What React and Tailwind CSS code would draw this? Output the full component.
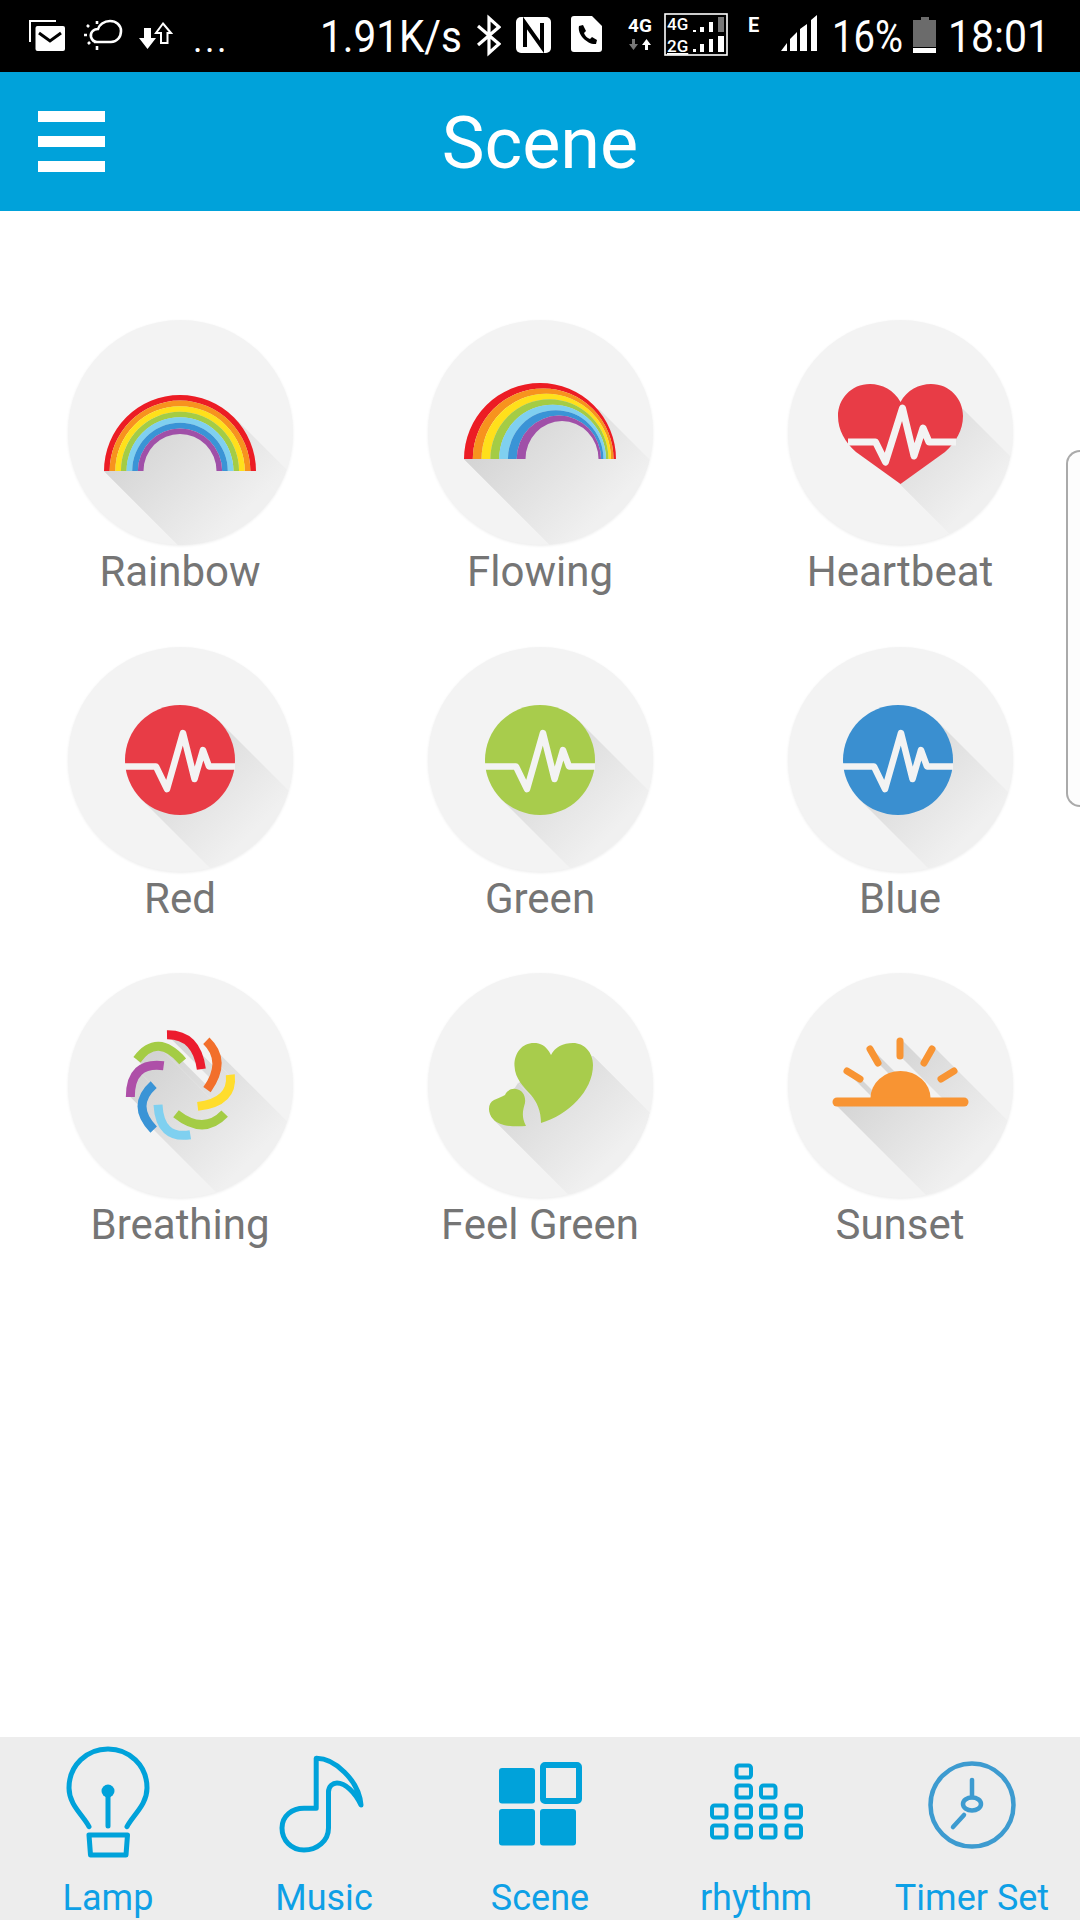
import React from 'react';

const BLUE = '#00a2da';
const BG = '#f3f3f3';

// long shadow behind an icon, thrown 45deg down-right from a segment
const cast = (x1, y1, x2, y2, d = 240) =>
    `${x1},${y1} ${x2},${y2} ${x2 + d},${y2 + d} ${x1 + d},${y1 + d}`;

const Shadow = ({ id, segs }) => (
    <>
        <defs>
            <linearGradient id={id} gradientUnits="userSpaceOnUse" x1="65" y1="105" x2="165" y2="205">
                <stop offset="0" stopColor="#d3d3d3" />
                <stop offset="1" stopColor="#f0f0f0" />
            </linearGradient>
        </defs>
        {segs.map((s, i) => (
            <polygon key={i} points={cast(...s)} fill={`url(#${id})`} />
        ))}
    </>
);

const BANDS = ['#ec1c24', '#f7931e', '#ffe01b', '#a4cc45', '#7fd0f0', '#3a94d6', '#a050a8'];

// nested half ellipses: outer box and inner box, all on one base line
const Bow = ({ l, r, top, il, ir, itop, base }) => (
    <>
        {BANDS.map((c, i) => {
            const at = (a, b, k) => a + ((b - a) * k) / 7;
            const l1 = at(l, il, i), r1 = at(r, ir, i), t1 = at(top, itop, i);
            const l2 = at(l, il, i + 1), r2 = at(r, ir, i + 1), t2 = at(top, itop, i + 1);
            const d = `M${l1},${base} A${(r1 - l1) / 2},${base - t1} 0 0 1 ${r1},${base} L${r2},${base} A${(r2 - l2) / 2},${base - t2} 0 0 0 ${l2},${base} Z`;
            return <path key={c} d={d} fill={c} />;
        })}
    </>
);

const Rainbow = () => (
    <svg viewBox="0 0 225 225" className="w-full h-full">
        <Shadow id="s-rainbow" segs={[[36, 151, 112, 75], [112, 75, 166, 97], [36, 151, 188, 151]]} />
        <Bow l={36} r={188} top={75} il={75.5} ir={148.5} itop={114} base={151} />
    </svg>
);

const Flowing = () => (
    <svg viewBox="0 0 225 225" className="w-full h-full">
        <Shadow id="s-flowing" segs={[[36, 139, 112, 63], [112, 63, 172, 90], [36, 139, 188, 139]]} />
        <Bow l={36} r={188} top={63} il={97.5} ir={170.5} itop={101} base={139} />
    </svg>
);

const Heartbeat = () => (
    <svg viewBox="0 0 225 225" className="w-full h-full">
        <Shadow id="s-heart" segs={[[112, 164, 172, 86], [112, 164, 50, 96]]} />
        <path
            d="M112.5,82 C106,70 94,64 82,64 C63,64 50,79 50,96 C50,110 57,122 68,132 L112.5,164 L157,132 C168,122 175,110 175,96 C175,79 162,64 143,64 C131,64 119,70 112.5,82 Z"
            fill="#e83c46"
        />
        <polyline
            points="60,122 87.5,122 97.5,142 114.5,88 126,136 135,108 141,122 168,122"
            fill="none"
            stroke={BG}
            strokeWidth="7"
            strokeLinejoin="round"
        />
    </svg>
);

const Pulse = ({ id, color, cx }) => (
    <svg viewBox="0 0 225 225" className="w-full h-full">
        <Shadow id={id} segs={[[cx - 39, 152, cx + 39, 74]]} />
        <circle cx={cx} cy="113" r="55" fill={color} />
        <polyline
            points={`${cx - 55},119.5 ${cx - 24},119.5 ${cx - 13},142 ${cx + 3},86 ${cx + 14.5},132 ${cx + 23},103 ${cx + 29},119.5 ${cx + 55},119.5`}
            fill="none"
            stroke={BG}
            strokeWidth="6.5"
            strokeLinejoin="round"
        />
    </svg>
);

// crop coords of the blades -> circle coords
const toCircle = ([x, y]) => [x / 3 - 26, y / 3 - 13.3];

const blade = (a, via, b) => {
    const [ax, ay] = toCircle(a), [vx, vy] = toCircle(via), [bx, by] = toCircle(b);
    return `M${ax},${ay} Q${2 * vx - (ax + bx) / 2},${2 * vy - (ay + by) / 2} ${bx},${by}`;
};

const BLADES = [
    ['#ec1c2e', [375, 225], [445, 250], [478, 328]],
    ['#f26f2b', [493, 243], [525, 310], [495, 390]],
    ['#ffdd2d', [565, 345], [545, 410], [467, 440]],
    ['#a4cc45', [548, 462], [480, 495], [402, 462]],
    ['#7fd0f0', [445, 525], [375, 510], [348, 435]],
    ['#3a94d6', [335, 375], [300, 440], [335, 510]],
    ['#ae4fa8', [365, 318], [290, 335], [265, 412]],
    ['#a4cc45', [285, 300], [350, 260], [422, 305]],
];

const bladeSegs = BLADES.flatMap(([, a, v, b]) => [
    [...toCircle(a), ...toCircle(v)],
    [...toCircle(v), ...toCircle(b)],
]);

const Breathing = () => (
    <svg viewBox="0 0 225 225" className="w-full h-full">
        <Shadow id="s-breath" segs={bladeSegs} />
        {BLADES.map(([c, a, v, b], i) => (
            <path key={i} d={blade(a, v, b)} fill="none" stroke={c} strokeWidth="9" />
        ))}
    </svg>
);

const FeelGreen = () => (
    <svg viewBox="0 0 225 225" className="w-full h-full">
        <Shadow id="s-feel" segs={[[66, 147, 165, 83], [66, 147, 90, 110], [90, 110, 165, 83]]} />
        <path
            d="M123,82 C118,72 112,70 106,70 C94,70 86,80 86.5,93 C87,106 96,114 103,122 C109,129 113,138 113,150 C140,142 165,118 165,92 C165,79 156,70 145,70 C135,70 127,74 123,82 Z"
            fill="#a8cc4c"
        />
        <path
            d="M77,122 C79,117 84,115 88,116 C94,117 98,122 97,130 C95,137 93,143 98,153 C84,154 71,153 65,146 C59,139 60,130 66,127 C70,125 74,124 77,122 Z"
            fill="#a8cc4c"
        />
    </svg>
);

const Sunset = () => (
    <svg viewBox="0 0 225 225" className="w-full h-full">
        <Shadow
            id="s-sun"
            segs={[
                [45, 129, 180, 129],
                [83, 125, 142, 125],
                [112, 65, 112, 83],
                [81, 73, 90, 90],
                [145, 73, 135, 90],
                [57, 97, 73, 106],
                [168, 97, 153, 106],
                [153, 106, 180, 129],
            ]}
        />
        <path d="M82.5,125 A30,27 0 0 1 142.5,125 Z" fill="#f89433" />
        <g stroke="#f89433" strokeLinecap="round" fill="none">
            <line x1="49" y1="129" x2="176" y2="129" strokeWidth="9" />
            <line x1="112" y1="68" x2="112" y2="83" strokeWidth="7" />
            <line x1="82" y1="76" x2="90" y2="90" strokeWidth="7" />
            <line x1="144" y1="76" x2="136" y2="90" strokeWidth="7" />
            <line x1="59" y1="98" x2="72" y2="106" strokeWidth="7" />
            <line x1="166" y1="98" x2="153" y2="106" strokeWidth="7" />
        </g>
    </svg>
);

const scenes = [
    { name: 'Rainbow', Icon: Rainbow },
    { name: 'Flowing', Icon: Flowing },
    { name: 'Heartbeat', Icon: Heartbeat },
    { name: 'Red', Icon: () => <Pulse id="s-red" color="#e83c46" cx={112} /> },
    { name: 'Green', Icon: () => <Pulse id="s-green" color="#a8cc4c" cx={112} /> },
    { name: 'Blue', Icon: () => <Pulse id="s-blue" color="#3a8fd0" cx={110} /> },
    { name: 'Breathing', Icon: Breathing },
    { name: 'Feel Green', Icon: FeelGreen },
    { name: 'Sunset', Icon: Sunset },
];

const LampIcon = () => (
    <svg width="95" height="115" viewBox="0 0 95 115" fill="none" stroke={BLUE} strokeWidth="5" strokeLinecap="round" strokeLinejoin="round">
        <path d="M28,81.7 C22,70 8,60 8,43 C8,20 26,4 47,4 C68,4 86,20 86,43 C86,60 72,70 66,81.7" />
        <line x1="47" y1="46" x2="47" y2="81" />
        <circle cx="47" cy="46" r="6.5" fill={BLUE} stroke="none" />
        <path d="M28,90 H66.5 L65,110 H29.5 Z" />
    </svg>
);

const MusicIcon = () => (
    <svg width="90" height="115" viewBox="0 0 90 115" fill="none" stroke={BLUE} strokeWidth="5" strokeLinejoin="round">
        <g transform="translate(0 5)">
            <path d="M37.2,58.3 V8.3 C55,8 80,30 82,55 C76,42 66,33 58,33 C54,33 49.5,36 49.5,42 V78 C49.5,91 38,100 25,100 C12,100 3,90 3,78 C3,66 13,58.3 25,58.3 H37.2 Z" />
        </g>
    </svg>
);

const SceneIcon = () => (
    <svg width="84" height="115" viewBox="498 1745 84 115" fill={BLUE}>
        <rect x="499" y="1768" width="36" height="35.5" rx="3" />
        <rect x="499" y="1809" width="36" height="36.5" rx="3" />
        <rect x="540" y="1809" width="36" height="36.5" rx="3" />
        <rect x="543" y="1765" width="36" height="36" rx="2" fill="none" stroke={BLUE} strokeWidth="6" />
    </svg>
);

const RhythmIcon = () => {
    const xs = [712.5, 737, 761.5, 787];
    const cells = [
        [1, 1764], [1, 1784], [2, 1784],
        [0, 1804], [1, 1804], [2, 1804], [3, 1804],
        [0, 1824], [1, 1824], [2, 1824], [3, 1824],
    ];
    return (
        <svg width="94" height="115" viewBox="711 1745 94 115" fill="none" stroke={BLUE} strokeWidth="4">
            {cells.map(([c, y], i) => (
                <rect key={i} x={xs[c] + 1.5} y={y + 1.5} width="14.5" height="12" rx="2.5" />
            ))}
        </svg>
    );
};

const TimerIcon = () => (
    <svg width="90" height="115" viewBox="929 1745 90 115" fill="none" stroke="#3d9bd0" strokeWidth="4.5" strokeLinecap="round">
        <circle cx="974" cy="1805" r="41.5" />
        <line x1="974" y1="1780" x2="974" y2="1797" />
        <ellipse cx="974" cy="1804" rx="9" ry="6.5" />
        <line x1="966" y1="1815" x2="955" y2="1827" />
    </svg>
);

const tabs = [
    { name: 'Lamp', Icon: LampIcon },
    { name: 'Music', Icon: MusicIcon },
    { name: 'Scene', Icon: SceneIcon },
    { name: 'rhythm', Icon: RhythmIcon },
    { name: 'Timer Set', Icon: TimerIcon },
];

const StatusBar = () => (
    <div className="flex h-[72px] bg-black text-white shrink-0 pl-[29px] overflow-hidden">
        <svg width="37" height="72" viewBox="29 0 37 72" className="shrink-0">
            <path d="M56,21 H30 V42" fill="none" stroke="#fff" strokeWidth="2" />
            <rect x="35.5" y="26" width="29.5" height="25" rx="2" fill="#fff" />
            <path d="M39,33 L50,41 L61,33" fill="none" stroke="#000" strokeWidth="3" />
        </svg>
        <svg width="42" height="72" viewBox="80 0 42 72" className="shrink-0 ml-[15px]" fill="none" stroke="#fff" strokeWidth="2.6">
            <path d="M93,42 H110 C116,42 120,37 120,31 C120,25 115,21 109,21 C103,21 98,25 97,29 C92,29 89,33 90,37 C91,40 93,42 96,42" />
            <path d="M83,35 H86 M86,25 L88,27 M96,21 V24 M87,44 L89,42 M96,46 V50" />
        </svg>
        <svg width="34" height="72" viewBox="138 0 34 72" className="shrink-0 ml-[16px]">
            <path d="M143,28 H150 V38 H155 L146.5,49 L138,38 H143 Z" fill="#fff" />
            <path d="M162,23.5 L170,33 H166.5 V43 H160 V33 H155 Z" fill="none" stroke="#fff" strokeWidth="2" />
        </svg>
        <span className="ml-[20px] w-[127px] text-[36px] leading-[80px] tracking-[2.5px]">...</span>
        <span className="w-[157px] text-[45px] leading-[74px] origin-left scale-x-[0.9] whitespace-nowrap">1.91K/s</span>
        <svg width="24" height="72" viewBox="477 0 24 72" className="shrink-0">
            <path d="M478,26 L499,44 L489,53 V18 L499,27 L478,45" fill="none" stroke="#fff" strokeWidth="3.2" />
        </svg>
        <svg width="36" height="72" viewBox="516 0 36 72" className="shrink-0 ml-[15px]">
            <rect x="516" y="17" width="35" height="36" rx="5" fill="#fff" />
            <path d="M525,47 V23 L542,47 V23" fill="none" stroke="#000" strokeWidth="4" />
        </svg>
        <svg width="32" height="72" viewBox="571 0 32 72" className="shrink-0 ml-[19px]">
            <path d="M574,16 H592 L602,26 V49 Q602,52 599,52 H574 Q571,52 571,49 V19 Q571,16 574,16 Z" fill="#fff" />
            <path d="M579,26 L583,25 L586,31 L584,33 C585,36 587,38 590,39 L592,37 L597,40 L596,44 C588,45 577,35 579,26 Z" fill="#000" />
        </svg>
        <svg width="30" height="72" viewBox="625 0 30 72" className="shrink-0 ml-[22px]">
            <text x="640" y="32" textAnchor="middle" fontSize="19" fontWeight="700" fill="#fff" fontFamily="Roboto, sans-serif">4G</text>
            <path d="M632,39 H635 V44 H638 L633.5,50 L629,44 H632 Z" fill="#777" />
            <path d="M645,50 H648 V45 H651 L646.5,39 L642,45 H645 Z" fill="#fff" />
        </svg>
        <svg width="66" height="72" viewBox="663 0 66 72" className="shrink-0 ml-[8px]">
            <rect x="665" y="14" width="62" height="41" fill="none" stroke="#fff" strokeWidth="1.6" />
            <text x="667" y="30" fontSize="17" fontWeight="500" fill="#fff" fontFamily="Roboto, sans-serif">4G</text>
            <text x="667" y="52" fontSize="17" fontWeight="500" fill="#fff" fontFamily="Roboto, sans-serif" textDecoration="underline">2G</text>
            <path d="M693,30 H696 V32 H693 Z M700,27 H704 V32 H700 Z M709,22 H713 V32 H709 Z" fill="#fff" />
            <rect x="718" y="17" width="6" height="15" fill="#777" />
            <path d="M693,49 H696 V52 H693 Z M700,44 H704 V52 H700 Z M709,39 H713 V52 H709 Z M718,36 H724 V52 H718 Z" fill="#fff" />
        </svg>
        <span className="ml-[19px] w-[33px] h-[72px] text-[20px] font-bold leading-[50px]">E</span>
        <svg width="37" height="72" viewBox="781 0 37 72" className="shrink-0">
            <path d="M781,51 L787,43 V51 Z M790,51 V39 L797,32 V51 Z M800,51 V29 L807,24 V51 Z M811,51 V20 L817,15 V51 Z" fill="#fff" />
        </svg>
        <span className="ml-[14px] w-[81px] text-[45px] leading-[74px] origin-left scale-x-[0.85] whitespace-nowrap">16%</span>
        <svg width="24" height="72" viewBox="913 0 24 72" className="shrink-0">
            <path d="M921,17 H929 V20 H936 V47 H913 V20 H921 Z" fill="#6b6b6b" />
            <rect x="913" y="48" width="23" height="5" fill="#fff" />
        </svg>
        <span className="ml-[11px] text-[45px] leading-[74px] origin-left scale-x-[0.91] whitespace-nowrap">18:01</span>
    </div>
);

const App = () => {
    return (
        <div className="relative w-[1080px] h-[1920px] flex flex-col bg-white overflow-hidden font-[Roboto,sans-serif]">
            <StatusBar />

            <header className="grid grid-cols-[1fr_auto_1fr] items-center h-[139px] shrink-0 bg-[#00a2da] text-white">
                <div className="flex flex-col gap-[14px] w-[67px] ml-[38px]">
                    <span className="block h-[11px] bg-white"></span>
                    <span className="block h-[11px] bg-white"></span>
                    <span className="block h-[11px] bg-white"></span>
                </div>
                <h1 className="text-[72px] leading-[80px] pt-[5px]">Scene</h1>
            </header>

            <main className="flex-1 pt-[109px]">
                <div className="grid grid-cols-3 gap-y-[50.5px]">
                    {scenes.map(({ name, Icon }) => (
                        <div key={name} className="flex flex-col items-center">
                            <div className="w-[225px] h-[225px] rounded-full overflow-hidden bg-[#f3f3f3] shadow-[0_1px_3px_rgba(0,0,0,0.08)]">
                                <Icon />
                            </div>
                            <span className="mt-[3px] text-[42px] leading-[48px] text-[#757575]">{name}</span>
                        </div>
                    ))}
                </div>
            </main>

            <nav className="grid grid-cols-5 h-[183px] shrink-0 bg-[#ededed] pt-[8px]">
                {tabs.map(({ name, Icon }) => (
                    <div key={name} className="flex flex-col items-center">
                        <Icon />
                        <span className="mt-[16px] text-[36px] leading-[44px] text-[#0ea0e6] whitespace-nowrap">{name}</span>
                    </div>
                ))}
            </nav>

            {/* edge handle of the side panel */}
            <div className="absolute right-0 top-[450px] w-[14px] h-[357px] rounded-l-[20px] border-y-2 border-l-2 border-[#aaaaaa] bg-[#fdfdfd]"></div>
        </div>
    );
};

export default App;
